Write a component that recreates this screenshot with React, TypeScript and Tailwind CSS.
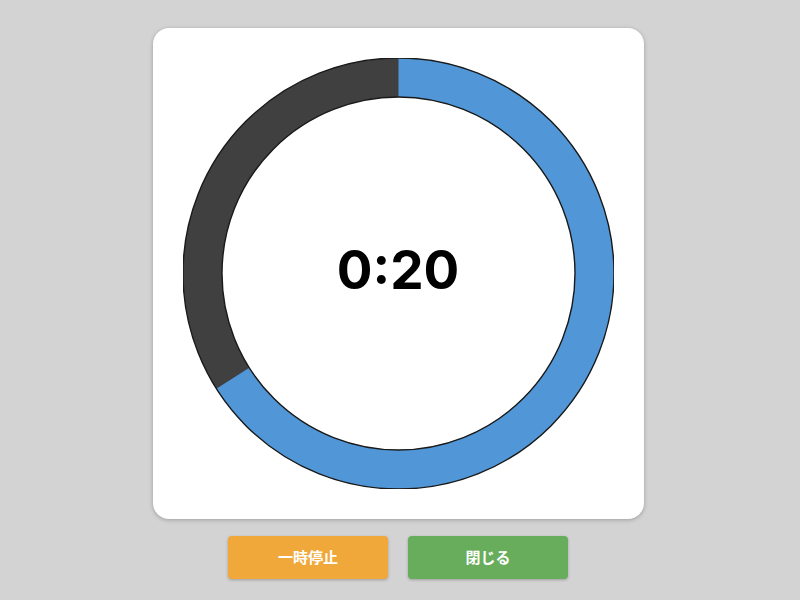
import React from "react";

/* ─── Ring ─────────────────────────────────────────────────────────────────── */
function Ring({ remain }: { remain: number }) {
  const size = 431;
  const c = size / 2;
  const outer = 215.5;
  const inner = 176.5;
  const mid = (outer + inner) / 2;
  const width = outer - inner;
  const circ = 2 * Math.PI * mid;

  return (
    <svg width={size} height={size} viewBox={`0 0 ${size} ${size}`} className="block">
      {/* elapsed part */}
      <circle cx={c} cy={c} r={mid} fill="none" stroke="#404040" strokeWidth={width} />
      {/* remaining part, clockwise from 12 o'clock */}
      <circle
        cx={c}
        cy={c}
        r={mid}
        fill="none"
        stroke="#5197d7"
        strokeWidth={width}
        strokeDasharray={`${circ * remain} ${circ}`}
        transform={`rotate(-90 ${c} ${c})`}
      />
      <circle cx={c} cy={c} r={outer} fill="none" stroke="#1a1a1a" strokeWidth={1.4} />
      <circle cx={c} cy={c} r={inner} fill="none" stroke="#1a1a1a" strokeWidth={1.4} />
    </svg>
  );
}

export default function App() {
  return (
    <div className="min-h-screen w-full bg-[#d3d3d3]">
      <div className="w-[796px] flex flex-col items-center pt-[28px]">
        <div className="relative bg-white rounded-2xl p-[30px] shadow-[0_1px_4px_rgba(0,0,0,0.25)]">
          <Ring remain={0.66} />
          <div className="absolute inset-0 flex items-center justify-center pb-[6px]">
            <span className="font-['Inter','Liberation_Sans',sans-serif] font-bold text-[53px] leading-none text-black">
              0:20
            </span>
          </div>
        </div>

        <div className="flex gap-5 mt-[17px]">
          <button className="w-[160px] h-[43px] rounded bg-[#f0a83a] text-white text-[15px] font-bold font-['Noto_Sans_CJK_JP',sans-serif] shadow-[0_1px_3px_rgba(0,0,0,0.25)]">
            一時停止
          </button>
          <button className="w-[160px] h-[43px] rounded bg-[#67ad5b] text-white text-[15px] font-bold font-['Noto_Sans_CJK_JP',sans-serif] shadow-[0_1px_3px_rgba(0,0,0,0.25)]">
            閉じる
          </button>
        </div>
      </div>
    </div>
  );
}
